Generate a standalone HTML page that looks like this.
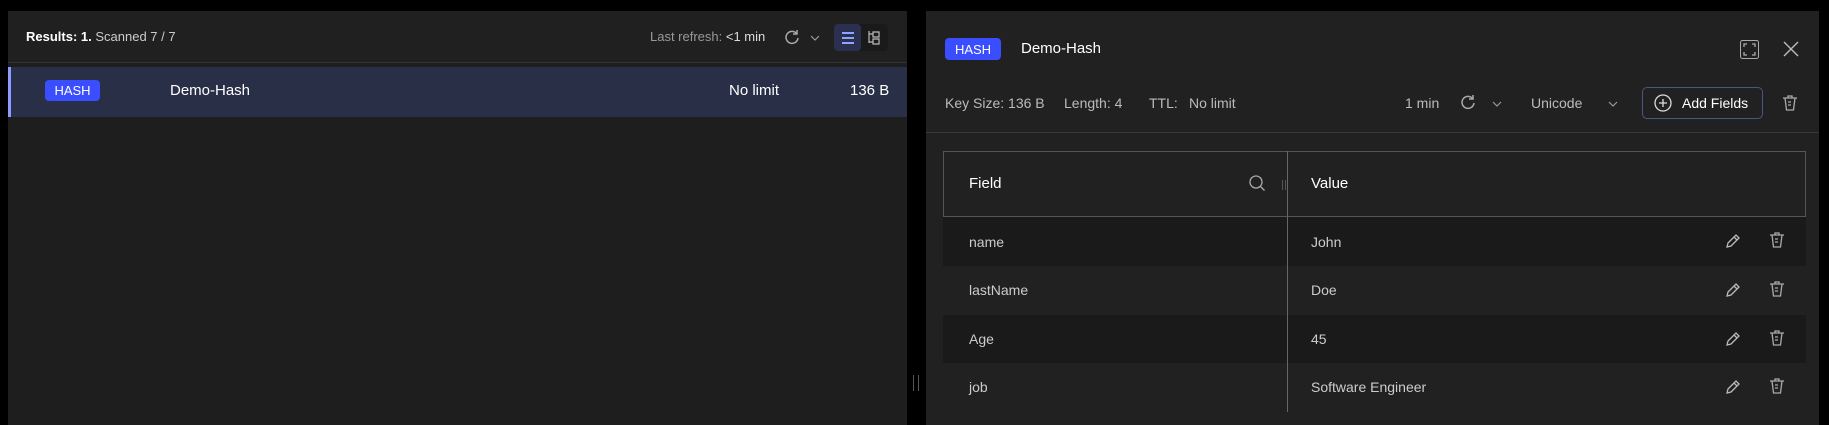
<!DOCTYPE html>
<html><head><meta charset="utf-8"><style>
*{margin:0;padding:0;box-sizing:border-box}
body{width:1829px;height:425px;background:#000;font-family:"Liberation Sans",sans-serif;color:#e0e0e0;position:relative;overflow:hidden;font-size:15px}
.a{position:absolute;white-space:nowrap}
.badge{background:#3a4dff;color:#fff;border-radius:4px;font-size:13px;display:flex;align-items:center;justify-content:center}
svg{position:absolute}
</style></head><body>
<!-- left panel -->
<div class="a" style="left:8px;top:11px;width:899px;height:414px;background:#1e1e1e"></div>
<div class="a" style="left:8px;top:11px;width:899px;height:52px;background:#202020;border-bottom:1px solid #333"></div>
<div class="a" style="left:26px;top:29px;font-size:13px;color:#ccc"><b style="color:#fff">Results: 1.</b> Scanned 7 / 7</div>
<div class="a" style="left:650px;top:29px;font-size:13px;color:#999">Last refresh: <span style="color:#ddd">&lt;1 min</span></div>
<svg style="left:783px;top:28px" width="18" height="18" viewBox="0 0 18 18"><path d="M14 6A6 6 0 1 0 15 10" fill="none" stroke="#aaa" stroke-width="1.5"/><path d="M14 2v4h-4" fill="none" stroke="#aaa" stroke-width="1.5"/></svg>
<svg style="left:810px;top:34px" width="10" height="8"><path d="M1 2l4 4 4-4" fill="none" stroke="#999" stroke-width="1.2"/></svg>
<div class="a" style="left:834px;top:24px;width:54px;height:27px;background:#1a1a1a;border-radius:4px"></div>
<div class="a" style="left:834px;top:24px;width:27px;height:27px;background:#2b3050;border-radius:4px"></div>
<svg style="left:840px;top:30px" width="16" height="16"><path d="M2 3h12M2 8h12M2 13h12" stroke="#8fa4ff" stroke-width="2"/></svg>
<svg style="left:866px;top:30px" width="16" height="16"><path d="M3 1v12M3 4h4M3 12h4M7 2h6v5H7zM7 9h6v5H7z" fill="none" stroke="#bbb" stroke-width="1.2"/></svg>
<div class="a" style="left:8px;top:67px;width:899px;height:50px;background:#2a2f48;border-left:3px solid #8d9cff"></div>
<div class="a badge" style="left:45px;top:80px;width:55px;height:21px">HASH</div>
<div class="a" style="left:170px;top:82px;color:#fff">Demo-Hash</div>
<div class="a" style="left:729px;top:82px;color:#fff">No limit</div>
<div class="a" style="left:850px;top:82px;color:#fff">136 B</div>
<div class="a" style="left:913px;top:375px;width:6px;height:16px;border-left:1px solid #555;border-right:1px solid #555"></div>
<!-- right panel -->
<div class="a" style="left:926px;top:11px;width:893px;height:414px;background:#212121"></div>
<div class="a badge" style="left:945px;top:38px;width:56px;height:22px">HASH</div>
<div class="a" style="left:1021px;top:40px;color:#fff;font-size:15px">Demo-Hash</div>
<svg style="left:1740px;top:40px" width="19" height="19"><rect x="0.5" y="0.5" width="18" height="18" rx="2" fill="none" stroke="#aaa"/><path d="M4 7V4h3M12 4h3v3M15 12v3h-3M7 15H4v-3" fill="none" stroke="#aaa" stroke-width="1.3"/></svg>
<svg style="left:1783px;top:41px" width="16" height="16"><path d="M1 1l14 14M15 1L1 15" stroke="#bbb" stroke-width="1.4"/></svg>
<div class="a" style="left:945px;top:95px;font-size:14px;color:#bbb">Key Size: 136 B</div>
<div class="a" style="left:1064px;top:95px;font-size:14px;color:#bbb">Length: 4</div>
<div class="a" style="left:1149px;top:95px;font-size:14px;color:#bbb">TTL:</div>
<div class="a" style="left:1189px;top:95px;font-size:14px;color:#bbb">No limit</div>
<div class="a" style="left:1405px;top:95px;font-size:14px;color:#bbb">1 min</div>
<svg style="left:1459px;top:93px" width="18" height="18" viewBox="0 0 18 18"><path d="M14 6A6 6 0 1 0 15 10" fill="none" stroke="#aaa" stroke-width="1.5"/><path d="M14 2v4h-4" fill="none" stroke="#aaa" stroke-width="1.5"/></svg>
<svg style="left:1492px;top:100px" width="10" height="8"><path d="M1 2l4 4 4-4" fill="none" stroke="#999" stroke-width="1.2"/></svg>
<div class="a" style="left:1531px;top:95px;font-size:14px;color:#bbb">Unicode</div>
<svg style="left:1608px;top:100px" width="10" height="8"><path d="M1 2l4 4 4-4" fill="none" stroke="#999" stroke-width="1.2"/></svg>
<div class="a" style="left:1642px;top:87px;width:121px;height:32px;border:1px solid #4a5580;border-radius:5px"></div>
<svg style="left:1654px;top:94px" width="18" height="18"><circle cx="9" cy="9" r="8" fill="none" stroke="#ddd" stroke-width="1.3"/><path d="M9 5v8M5 9h8" stroke="#ddd" stroke-width="1.3"/></svg>
<div class="a" style="left:1682px;top:95px;font-size:14px;color:#fff">Add Fields</div>
<svg style="left:1781px;top:94px" width="18" height="18"><path d="M2 4h14M7 4V2h4v2M4 4l1.5 12h7L14 4M7 8h3M7 11h3" fill="none" stroke="#aaa" stroke-width="1.3"/></svg>
<div class="a" style="left:926px;top:132px;width:893px;height:1px;background:#3a3a3a"></div>
<!-- table -->
<div class="a" style="left:943px;top:151px;width:863px;height:66px;border:1px solid #555"></div>
<div class="a" style="left:969px;top:175px;color:#fff">Field</div>
<svg style="left:1248px;top:174px" width="18" height="20"><circle cx="8" cy="8" r="6" fill="none" stroke="#aaa" stroke-width="1.3"/><path d="M12.5 12.5l4 4" stroke="#aaa" stroke-width="1.3"/></svg>
<div class="a" style="left:1282px;top:180px;width:4px;height:10px;border-left:1px solid #555;border-right:1px solid #555"></div>
<div class="a" style="left:1311px;top:175px;color:#fff">Value</div>
<div class="a" style="left:943px;top:217px;width:863px;height:49px;background:#1a1a1a"></div>
<div class="a" style="left:943px;top:315px;width:863px;height:48px;background:#1a1a1a"></div>
<div class="a" style="left:1287px;top:151px;width:1px;height:261px;background:#666"></div>
<div class="a" style="left:969px;top:234px;color:#ccc;font-size:14px">name</div>
<div class="a" style="left:1311px;top:234px;color:#ccc;font-size:14px">John</div>
<div class="a" style="left:969px;top:282px;color:#ccc;font-size:14px">lastName</div>
<div class="a" style="left:1311px;top:282px;color:#ccc;font-size:14px">Doe</div>
<div class="a" style="left:969px;top:331px;color:#ccc;font-size:14px">Age</div>
<div class="a" style="left:1311px;top:331px;color:#ccc;font-size:14px">45</div>
<div class="a" style="left:969px;top:379px;color:#ccc;font-size:14px">job</div>
<div class="a" style="left:1311px;top:379px;color:#ccc;font-size:14px">Software Engineer</div>
<svg style="left:1724px;top:232px" width="18" height="18"><path d="M3 15l1-4 8-8 3 3-8 8zM10 5l3 3" fill="none" stroke="#bbb" stroke-width="1.3"/></svg>
<svg style="left:1768px;top:231px" width="18" height="18"><path d="M2 4h14M7 4V2h4v2M4 4l1.5 12h7L14 4M7 8h3M7 11h3" fill="none" stroke="#aaa" stroke-width="1.3"/></svg>
<svg style="left:1724px;top:281px" width="18" height="18"><path d="M3 15l1-4 8-8 3 3-8 8zM10 5l3 3" fill="none" stroke="#bbb" stroke-width="1.3"/></svg>
<svg style="left:1768px;top:280px" width="18" height="18"><path d="M2 4h14M7 4V2h4v2M4 4l1.5 12h7L14 4M7 8h3M7 11h3" fill="none" stroke="#aaa" stroke-width="1.3"/></svg>
<svg style="left:1724px;top:330px" width="18" height="18"><path d="M3 15l1-4 8-8 3 3-8 8zM10 5l3 3" fill="none" stroke="#bbb" stroke-width="1.3"/></svg>
<svg style="left:1768px;top:329px" width="18" height="18"><path d="M2 4h14M7 4V2h4v2M4 4l1.5 12h7L14 4M7 8h3M7 11h3" fill="none" stroke="#aaa" stroke-width="1.3"/></svg>
<svg style="left:1724px;top:378px" width="18" height="18"><path d="M3 15l1-4 8-8 3 3-8 8zM10 5l3 3" fill="none" stroke="#bbb" stroke-width="1.3"/></svg>
<svg style="left:1768px;top:377px" width="18" height="18"><path d="M2 4h14M7 4V2h4v2M4 4l1.5 12h7L14 4M7 8h3M7 11h3" fill="none" stroke="#aaa" stroke-width="1.3"/></svg>
</body></html>
